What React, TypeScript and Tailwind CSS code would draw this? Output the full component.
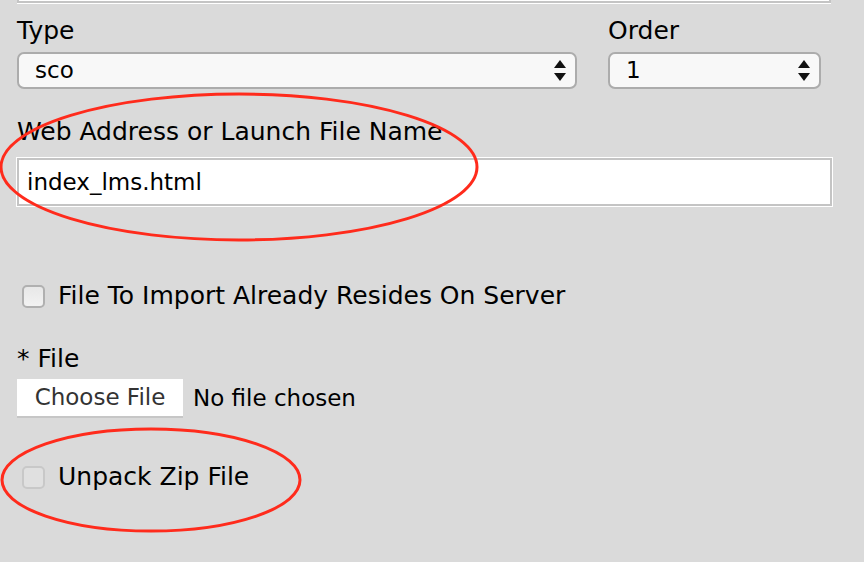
import React from 'react';

const SelectBox = ({ value, width }: { value: string; width: string }) => {
  return (
    <div
      className={`${width} h-[37px] flex items-center justify-between pl-[16px] pr-[9px] rounded-[7px] border-2 border-[#acacac] bg-[#f8f8f8]`}
    >
      <span className="text-[23px] leading-none text-black">{value}</span>
      <svg width="12" height="22" viewBox="0 0 12 22">
        <path d="M6 0 L12 8 L0 8 Z" fill="#111" />
        <path d="M0 13 L12 13 L6 21 Z" fill="#111" />
      </svg>
    </div>
  );
};

const CheckBox = ({ faded }: { faded?: boolean }) => {
  return (
    <span
      className={`inline-block w-[23px] h-[23px] rounded-[5px] border-2 ${
        faded ? 'border-[#c8c8c8] bg-[#e0e0e0]' : 'border-[#b0b0b0] bg-gradient-to-b from-[#e8e8e8] to-[#f2f2f2]'
      }`}
    />
  );
};

const App = () => {
  return (
    <div
      className="relative w-[864px] h-[562px] overflow-hidden bg-[#dadada] text-black"
      style={{ fontFamily: '"DejaVu Sans", Verdana, sans-serif' }}
    >
      {/* bottom of the field above */}
      <div className="ml-[17px] w-[814px] h-[3px] bg-white border-x-2 border-b-2 border-[#c4c4c4] shadow-[0_1px_0_0_#ffffff]" />

      <div className="pl-[17px] w-[832px]">
        <div className="flex gap-[31px] pt-[13px]">
          <div className="flex flex-col">
            <label className="text-[25px] leading-[30px]">Type</label>
            <div className="mt-[6px]">
              <SelectBox value="sco" width="w-[560px]" />
            </div>
          </div>
          <div className="flex flex-col">
            <label className="text-[25px] leading-[30px]">Order</label>
            <div className="mt-[6px]">
              <SelectBox value="1" width="w-[213px]" />
            </div>
          </div>
        </div>

        <div className="mt-[28px] text-[25px] leading-[30px]">Web Address or Launch File Name</div>
        <div className="mt-[11px] w-[815px] h-[48px] flex items-center px-[8px] bg-white border-2 border-[#c4c4c4] shadow-[0_0_0_1px_#ffffff]">
          <span className="text-[23px]">index_lms.html</span>
        </div>

        <div className="mt-[75px] flex items-center gap-[13px] pl-[5px]">
          <CheckBox />
          <span className="text-[25px] leading-[30px]">File To Import Already Resides On Server</span>
        </div>

        <div className="mt-[33px] text-[25px] leading-[30px]">* File</div>
        <div className="mt-[5px] flex items-center gap-[10px]">
          <button className="w-[166px] h-[39px] bg-white border-b-2 border-[#c6c6c6] text-[23px] text-[#333]">
            Choose File
          </button>
          <span className="text-[23px]">No file chosen</span>
        </div>

        <div className="mt-[44px] flex items-center gap-[13px] pl-[5px]">
          <CheckBox faded />
          <span className="text-[25px] leading-[30px]">Unpack Zip File</span>
        </div>
      </div>

      {/* red annotation circles */}
      <svg className="absolute inset-0 pointer-events-none" width="864" height="562">
        <ellipse cx="239" cy="167" rx="238" ry="73" fill="none" stroke="#ff2b1c" strokeWidth="3" />
        <ellipse cx="151" cy="480" rx="149" ry="51" fill="none" stroke="#ff2b1c" strokeWidth="3" />
      </svg>
    </div>
  );
};

export default App;
